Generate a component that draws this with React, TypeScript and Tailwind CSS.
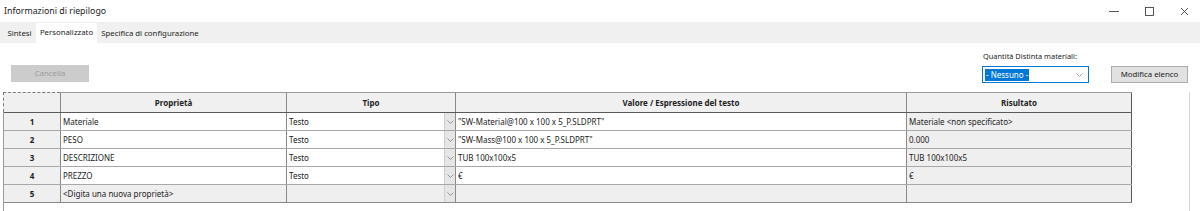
import React from "react";

const rows = [
  { n: "1", p: "Materiale", t: "Testo", v: "\"SW-Material@100 x 100 x 5_P.SLDPRT\"", r: "Materiale <non specificato>" },
  { n: "2", p: "PESO", t: "Testo", v: "\"SW-Mass@100 x 100 x 5_P.SLDPRT\"", r: "0.000" },
  { n: "3", p: "DESCRIZIONE", t: "Testo", v: "TUB 100x100x5", r: "TUB 100x100x5" },
  { n: "4", p: "PREZZO", t: "Testo", v: "€", r: "€" },
];

function Chevron({ color = "#8a8a8a" }: { color?: string }) {
  return (
    <svg width="7" height="4" viewBox="0 0 7 4" fill="none">
      <path d="M0.5 0.5 L3.5 3.5 L6.5 0.5" stroke={color} strokeWidth="0.9" />
    </svg>
  );
}

export default function App() {
  return (
    <div
      className="w-[1200px] h-[211px] bg-white text-[#1a1a1a] overflow-hidden flex flex-col"
      style={{ fontFamily: '"Noto Sans", "Open Sans", sans-serif' }}
    >
      {/* Title bar */}
      <div className="h-[22px] flex items-center justify-between pl-[4px]">
        <span className="text-[8.8px] leading-none text-[#222]">Informazioni di riepilogo</span>
        <div className="flex items-center h-full gap-[26px] pr-[11px]">
          <svg width="10" height="10" viewBox="0 0 10 10"><path d="M0 5.5 H10" stroke="#444" strokeWidth="0.9" /></svg>
          <svg width="9" height="9" viewBox="0 0 9 9"><rect x="0.5" y="0.5" width="8" height="8" fill="none" stroke="#444" strokeWidth="0.9" /></svg>
          <svg width="9" height="9" viewBox="0 0 9 9"><path d="M1 1 L8 8 M8 1 L1 8" stroke="#444" strokeWidth="0.9" /></svg>
        </div>
      </div>

      {/* Tab strip */}
      <div className="h-[21px] bg-[#f0f0f0] flex items-end pl-[3px] text-[7.8px] leading-none text-[#222]">
        <div className="w-[33px] h-[19px] flex items-center justify-center pt-[1px]">Sintesi</div>
        <div className="w-[61px] h-[20px] bg-white flex items-center justify-center">Personalizzato</div>
        <div className="w-[106px] h-[19px] flex items-center justify-center pt-[1px]">Specifica di configurazione</div>
      </div>

      {/* Controls row */}
      <div className="h-[49px] flex items-start">
        <div className="mt-[22px] ml-[11px] w-[78px] h-[17px] bg-[#cccccc] flex items-center justify-center text-[7.8px] text-[#9d9d9d]">
          Cancella
        </div>
        <div className="ml-auto flex flex-col mr-[12px] mt-[8px]">
          <span className="ml-[1px] text-[7.4px] leading-[10px] text-[#222]">Quantità Distinta materiali:</span>
          <div className="flex items-center mt-[5px]">
            <div className="w-[107px] h-[17px] border border-[#0078d7] bg-white flex items-center justify-between pl-[2px] pr-[5px]">
              <span className="bg-[#0078d7] text-white text-[8px] leading-[12px] px-[1px]">- Nessuno -</span>
              <Chevron color="#9a9a9a" />
            </div>
            <div className="ml-[22px] w-[77px] h-[17px] bg-[#e1e1e1] border border-[#adadad] flex items-center justify-center text-[7.8px] text-[#222]">
              Modifica elenco
            </div>
          </div>
        </div>
      </div>

      {/* Table */}
      <div className="ml-[3px] w-[1187px] flex-1 border-l border-r border-[#d9d9d9] border-l-[#9a9a9a] text-[8px] leading-none text-[#222]">
        <div className="flex">
          <div className="flex flex-col border-t border-[#9a9a9a]">
            {/* Header */}
            <div className="flex h-[20px] bg-[#f0f0f0] font-bold border-b border-[#5a5a5a]">
              <div className="w-[57px] border-r border-[#8a8a8a] flex">
                <div className="-mt-px -ml-px w-[57px] h-[20px] bg-[#f0f0f0] border border-dashed border-[#7a7a7a] border-r-0 border-b-0"></div>
              </div>
              <div className="w-[226px] border-r border-[#8a8a8a] flex items-center justify-center">Proprietà</div>
              <div className="w-[169px] border-r border-[#8a8a8a] flex items-center justify-center">Tipo</div>
              <div className="w-[451px] border-r border-[#8a8a8a] flex items-center justify-center">Valore / Espressione del testo</div>
              <div className="w-[225px] border-r border-[#5a5a5a] flex items-center justify-center">Risultato</div>
            </div>
            {rows.map((r) => (
              <div key={r.n} className="flex h-[18px] border-b border-[#a8a8a8]">
                <div className="w-[57px] bg-[#f0f0f0] border-r border-[#8a8a8a] flex items-center justify-center font-bold">{r.n}</div>
                <div className="w-[226px] bg-white border-r border-[#8a8a8a] flex items-center pl-[2px]">{r.p}</div>
                <div className="w-[169px] bg-white border-r border-[#8a8a8a] flex items-center">
                  <span className="flex-1 pl-[2px]">{r.t}</span>
                  <div className="w-[11px] h-full bg-[#e6e6e6] border-l border-[#cfcfcf] flex items-center justify-center">
                    <Chevron />
                  </div>
                </div>
                <div className="w-[451px] bg-white border-r border-[#8a8a8a] flex items-center pl-[2px]">{r.v}</div>
                <div className="w-[225px] bg-[#efefef] border-r border-[#5a5a5a] flex items-center pl-[2px]">{r.r}</div>
              </div>
            ))}
            <div className="flex h-[18px] border-b border-[#8a8a8a] bg-[#efefef]">
              <div className="w-[57px] border-r border-[#8a8a8a] flex items-center justify-center font-bold">5</div>
              <div className="w-[226px] border-r border-[#8a8a8a] flex items-center pl-[2px]">&lt;Digita una nuova proprietà&gt;</div>
              <div className="w-[169px] border-r border-[#8a8a8a] flex items-center">
                <span className="flex-1"></span>
                <div className="w-[11px] h-full bg-[#e6e6e6] border-l border-[#cfcfcf] flex items-center justify-center">
                  <Chevron />
                </div>
              </div>
              <div className="w-[451px] border-r border-[#8a8a8a]"></div>
              <div className="w-[225px] border-r border-[#5a5a5a]"></div>
            </div>
          </div>
        </div>
      </div>
    </div>
  );
}
